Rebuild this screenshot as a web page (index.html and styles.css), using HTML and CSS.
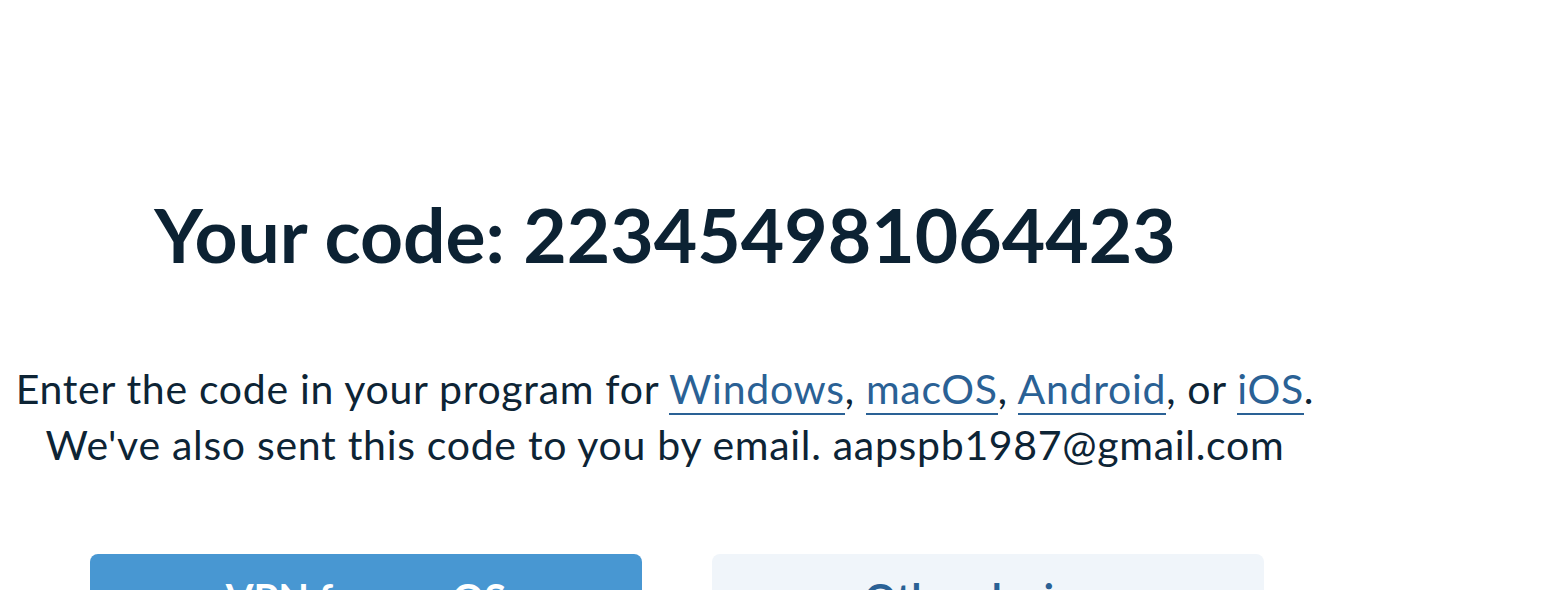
FILE: index.html
```html
<!DOCTYPE html>
<html lang="en">
<head>
<meta charset="utf-8">
<title>Your code</title>
<link rel="stylesheet" href="styles.css">
</head>
<body>
<main class="page">
  <h1 class="title">Your code: 223454981064423</h1>
  <p class="info">Enter the code in your program for <a href="#">Windows</a>, <a href="#">macOS</a>, <a href="#">Android</a>, or <a href="#">iOS</a>.<br>We've also sent this code to you by email. aapspb1987@gmail.com</p>
  <div class="actions">
    <a class="btn btn-primary" href="#">VPN for macOS</a>
    <a class="btn btn-secondary" href="#">Other devices</a>
  </div>
</main>
</body>
</html>
```
FILE: styles.css
```css
* { box-sizing: border-box; }
html, body { margin: 0; padding: 0; background: #ffffff; }
body { font-family: "Lato", "Noto Sans", sans-serif; color: #0d2435; overflow: hidden; height: 590px; }
.page { width: 1330px; padding-top: 186px; display: flex; flex-direction: column; align-items: center; }
.title { margin: 0; font-size: 75px; font-weight: 700; line-height: 96px; color: #0c2233; letter-spacing: 0; }
.info { margin: 79px 0 0; font-size: 41px; line-height: 56px; letter-spacing: 0.7px; text-align: center; color: #0d2435; }
.info a { color: #2a6195; text-decoration: none; border-bottom: 2px solid #2a6195; }
.actions { margin-top: 81px; display: flex; gap: 70px; padding-left: 24px; }
.btn { width: 552px; height: 88px; border-radius: 8px; display: flex; align-items: center; justify-content: center; font-size: 40px; font-weight: 700; text-decoration: none; flex: none; }
.btn-primary { background: #4897d2; color: #ffffff; }
.btn-secondary { background: #f0f5fa; color: #2a6195; }
```
